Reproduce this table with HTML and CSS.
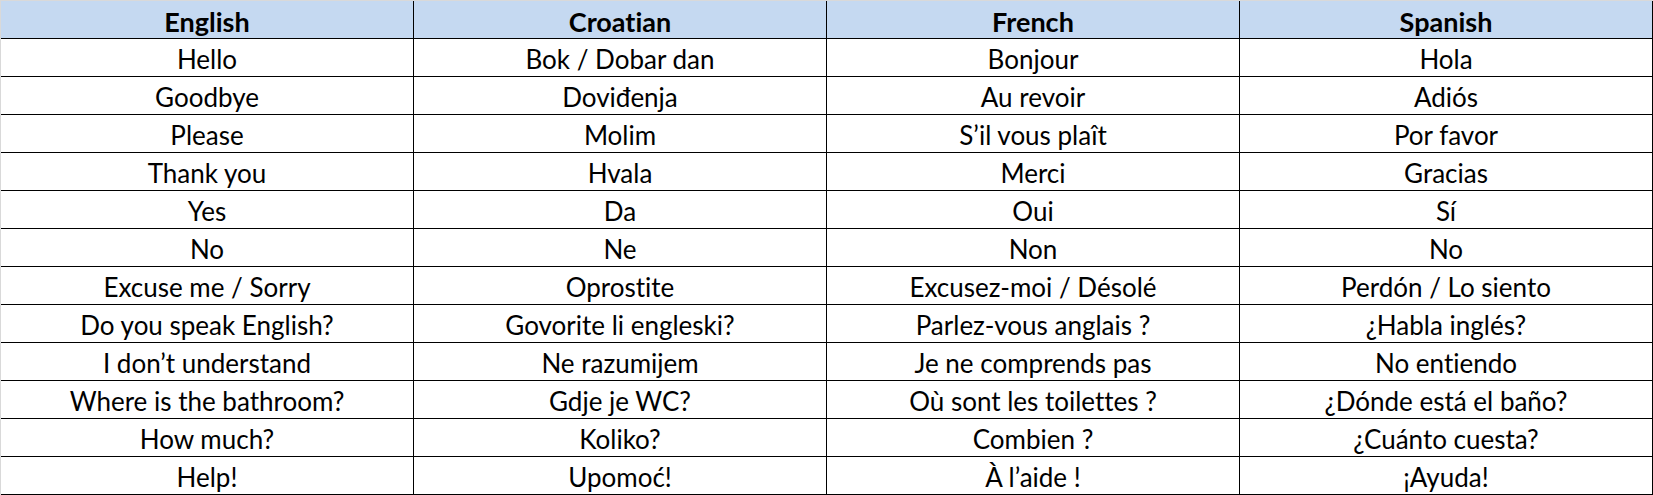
FILE: index.html
```html
<!DOCTYPE html>
<html lang="en">
<head>
<meta charset="utf-8">
<title>Phrases</title>
<link rel="stylesheet" href="styles.css">
</head>
<body>
<div class="sheet">
  <div class="cell head">English</div>
  <div class="cell head">Croatian</div>
  <div class="cell head">French</div>
  <div class="cell head">Spanish</div>

  <div class="cell">Hello</div><div class="cell">Bok / Dobar dan</div><div class="cell">Bonjour</div><div class="cell">Hola</div>
  <div class="cell">Goodbye</div><div class="cell">Doviđenja</div><div class="cell">Au revoir</div><div class="cell">Adiós</div>
  <div class="cell">Please</div><div class="cell">Molim</div><div class="cell">S’il vous plaît</div><div class="cell">Por favor</div>
  <div class="cell">Thank you</div><div class="cell">Hvala</div><div class="cell">Merci</div><div class="cell">Gracias</div>
  <div class="cell">Yes</div><div class="cell">Da</div><div class="cell">Oui</div><div class="cell">Sí</div>
  <div class="cell">No</div><div class="cell">Ne</div><div class="cell">Non</div><div class="cell">No</div>
  <div class="cell">Excuse me / Sorry</div><div class="cell">Oprostite</div><div class="cell">Excusez-moi / Désolé</div><div class="cell">Perdón / Lo siento</div>
  <div class="cell">Do you speak English?</div><div class="cell">Govorite li engleski?</div><div class="cell">Parlez-vous anglais ?</div><div class="cell">¿Habla inglés?</div>
  <div class="cell">I don’t understand</div><div class="cell">Ne razumijem</div><div class="cell">Je ne comprends pas</div><div class="cell">No entiendo</div>
  <div class="cell">Where is the bathroom?</div><div class="cell">Gdje je WC?</div><div class="cell">Où sont les toilettes ?</div><div class="cell">¿Dónde está el baño?</div>
  <div class="cell">How much?</div><div class="cell">Koliko?</div><div class="cell">Combien ?</div><div class="cell">¿Cuánto cuesta?</div>
  <div class="cell">Help!</div><div class="cell">Upomoć!</div><div class="cell">À l’aide !</div><div class="cell">¡Ayuda!</div>
</div>
</body>
</html>
```
FILE: styles.css
```css
html, body {
  margin: 0;
  padding: 0;
  background: #ffffff;
}
.sheet {
  display: grid;
  grid-template-columns: repeat(4, 413px);
  grid-auto-rows: 38px;
  width: 1652px;
  border-top: 1px solid #d9d9d9;
  border-left: 1px solid #d9d9d9;
  font-family: Lato, "Open Sans", sans-serif;
  font-size: 26px;
  font-variant-ligatures: none;
  font-feature-settings: "liga" 0, "dlig" 0;
  color: #000;
}
.cell {
  box-sizing: border-box;
  border-right: 1px solid #000;
  border-bottom: 1px solid #000;
  display: flex;
  align-items: center;
  justify-content: center;
  padding-top: 3px;
  white-space: nowrap;
}
.head {
  background: #c5d9f1;
  font-weight: bold;
  font-size: 27px;
}
```
